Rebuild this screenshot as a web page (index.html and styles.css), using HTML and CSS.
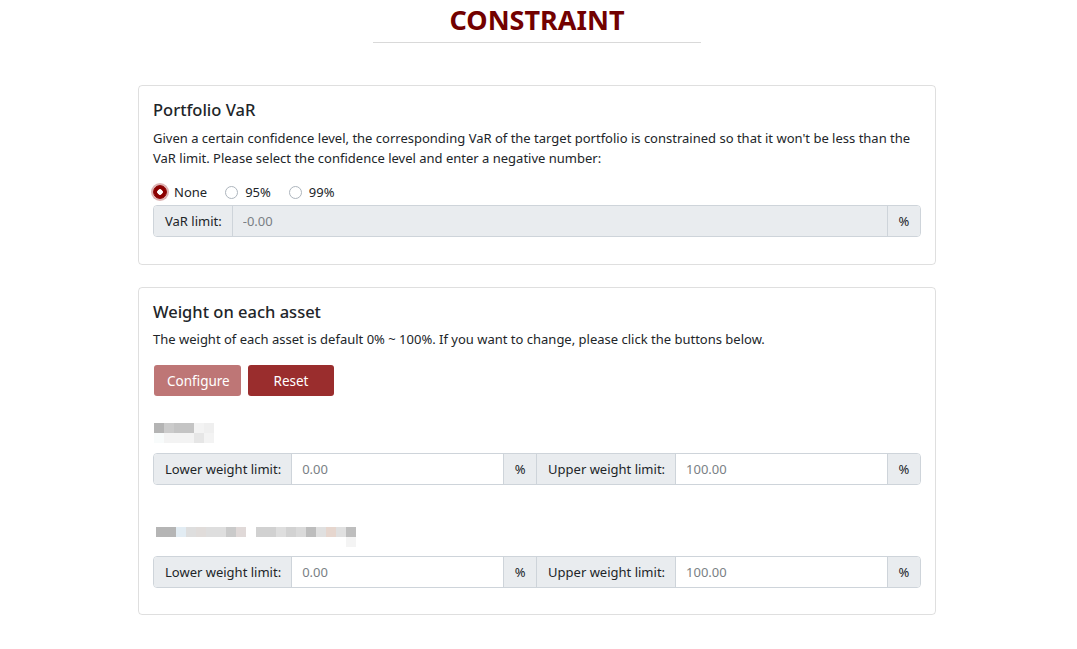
FILE: index.html
```html
<!DOCTYPE html>
<html lang="en">
<head>
<meta charset="utf-8">
<title>Constraint</title>
<link rel="stylesheet" href="styles.css">
</head>
<body>
<header class="title-block">
  <h1 class="page-title">CONSTRAINT</h1>
  <hr class="title-rule">
</header>
<main class="container">
  <section class="card card-var">
    <h2 class="card-title">Portfolio VaR</h2>
    <p class="card-text">Given a certain confidence level, the corresponding VaR of the target portfolio is constrained so that it won't be less than the VaR limit. Please select the confidence level and enter a negative number:</p>
    <div class="radio-row">
      <label class="radio"><input type="radio" name="conf" checked><span>None</span></label>
      <label class="radio"><input type="radio" name="conf"><span>95%</span></label>
      <label class="radio"><input type="radio" name="conf"><span>99%</span></label>
    </div>
    <div class="input-group">
      <span class="addon">VaR limit:</span>
      <input class="field field-disabled" type="text" placeholder="-0.00" disabled>
      <span class="addon addon-pct">%</span>
    </div>
  </section>

  <section class="card card-weight">
    <h2 class="card-title">Weight on each asset</h2>
    <p class="card-text">The weight of each asset is default 0% ~ 100%. If you want to change, please click the buttons below.</p>
    <div class="btn-row">
      <button class="btn btn-configure" type="button">Configure</button>
      <button class="btn btn-reset" type="button">Reset</button>
    </div>

    <div class="asset">
      <svg class="masked masked-1" width="62" height="20" viewBox="0 0 62 20" aria-label="asset name">
        <rect x="0" y="0" width="10" height="10" fill="#b4b4b4"/>
        <rect x="10" y="0" width="10" height="10" fill="#cbcbcb"/>
        <rect x="20" y="0" width="20" height="10" fill="#c4c4c4"/>
        <rect x="40" y="0" width="10" height="10" fill="#f3f3f3"/>
        <rect x="50" y="0" width="10" height="10" fill="#efefef"/>
        <rect x="0" y="10" width="10" height="10" fill="#f8fbfb"/>
        <rect x="10" y="10" width="30" height="10" fill="#f3f3f3"/>
        <rect x="40" y="10" width="10" height="10" fill="#e6e6e6"/>
        <rect x="50" y="10" width="10" height="10" fill="#f3f3f3"/>
      </svg>
      <div class="input-group">
        <span class="addon">Lower weight limit:</span>
        <input class="field" type="text" placeholder="0.00">
        <span class="addon addon-pct">%</span>
        <span class="addon">Upper weight limit:</span>
        <input class="field" type="text" placeholder="100.00">
        <span class="addon addon-pct">%</span>
      </div>
    </div>

    <div class="asset">
      <svg class="masked masked-2" width="202" height="20" viewBox="0 0 202 20" aria-label="asset name">
        <rect x="0" y="0" width="20" height="10" fill="#b5b5b5"/>
        <rect x="20" y="0" width="10" height="10" fill="#e2ecf3"/>
        <rect x="30" y="0" width="10" height="10" fill="#dedede"/>
        <rect x="40" y="0" width="10" height="10" fill="#e0dcda"/>
        <rect x="50" y="0" width="20" height="10" fill="#dedede"/>
        <rect x="70" y="0" width="10" height="10" fill="#cacaca"/>
        <rect x="80" y="0" width="10" height="10" fill="#e0d9d8"/>
        <rect x="100" y="0" width="20" height="10" fill="#d1d1d1"/>
        <rect x="120" y="0" width="10" height="10" fill="#dedede"/>
        <rect x="130" y="0" width="10" height="10" fill="#d2d2d2"/>
        <rect x="140" y="0" width="10" height="10" fill="#dadada"/>
        <rect x="150" y="0" width="10" height="10" fill="#bdbdbd"/>
        <rect x="160" y="0" width="10" height="10" fill="#e0e0e0"/>
        <rect x="170" y="0" width="10" height="10" fill="#e6d6ce"/>
        <rect x="180" y="0" width="10" height="10" fill="#e0e0e0"/>
        <rect x="190" y="0" width="10" height="10" fill="#bebebe"/>
        <rect x="190" y="10" width="10" height="10" fill="#f4f4f4"/>
      </svg>
      <div class="input-group">
        <span class="addon">Lower weight limit:</span>
        <input class="field" type="text" placeholder="0.00">
        <span class="addon addon-pct">%</span>
        <span class="addon">Upper weight limit:</span>
        <input class="field" type="text" placeholder="100.00">
        <span class="addon addon-pct">%</span>
      </div>
    </div>
  </section>
</main>
</body>
</html>
```

FILE: styles.css
```css
* { box-sizing: border-box; }

html, body {
  margin: 0;
  background: #fff;
}

body {
  padding-right: 3px;
  font-family: "Noto Sans", "Open Sans", sans-serif;
  font-size: 13px;
  color: #212529;
}

.title-block {
  padding-top: 3px;
}

.page-title {
  margin: 0;
  text-align: center;
  font-size: 27px;
  line-height: 34px;
  font-weight: 700;
  color: #720000;
}

.title-rule {
  width: 328px;
  margin: 5px auto 0;
  border: 0;
  border-top: 1px solid #d9d9d9;
  height: 0;
}

.container {
  width: 798px;
  margin: 42px auto 0;
  display: flex;
  flex-direction: column;
  gap: 22px;
}

.card {
  border: 1px solid rgba(0, 0, 0, 0.125);
  border-radius: 4px;
  padding: 12px 14px 27px;
}

.card-weight {
  padding-bottom: 26px;
}

.card-title {
  margin: 0;
  font-size: 16.5px;
  line-height: 24px;
  font-weight: 500;
  color: #212529;
}

.card-text {
  margin: 6px 0 0;
  line-height: 20px;
}

.card-weight .card-text {
  margin-top: 5px;
}

.radio-row {
  display: flex;
  align-items: center;
  gap: 18px;
  margin-top: 14px;
  height: 20px;
}

.radio {
  display: flex;
  align-items: center;
  gap: 7px;
  cursor: pointer;
}

.radio input {
  appearance: none;
  -webkit-appearance: none;
  margin: 0;
  width: 13px;
  height: 13px;
  border: 1px solid #adb5bd;
  border-radius: 50%;
  background: #fff;
}

.radio input:checked {
  width: 14px;
  height: 14px;
  background: radial-gradient(circle, #fff 0 2.5px, #8b0000 3px);
  border-color: #8b0000;
  box-shadow: 0 0 0 2px rgba(139, 0, 0, 0.3);
}

.input-group {
  display: flex;
  height: 32px;
  margin-top: 3px;
  border: 1px solid #ced4da;
  border-radius: 4px;
  overflow: hidden;
}

.addon {
  display: flex;
  align-items: center;
  padding: 0 10px 0 11px;
  background: #e9ecef;
  color: #212529;
  white-space: nowrap;
}

.addon + .field,
.field + .addon,
.addon + .addon {
  border-left: 1px solid #ced4da;
}

.addon-pct {
  width: 33px;
  justify-content: center;
  padding: 0;
}

.field {
  flex: 1;
  min-width: 0;
  border: 0;
  padding: 0 10px;
  font: inherit;
  color: #495057;
  background: #fff;
  outline: none;
}

.field::placeholder {
  color: #7a7f85;
}

.field-disabled {
  background: #e9ecef;
}

.btn-row {
  display: flex;
  gap: 7px;
  margin-top: 16px;
  padding-left: 1px;
}

.btn {
  height: 31px;
  border: 0;
  border-radius: 3px;
  padding: 0 13px;
  font: inherit;
  font-size: 13.5px;
  color: #fff;
}

.btn-configure {
  width: 87px;
  background: #be7676;
}

.btn-reset {
  width: 86px;
  background: #9a2d2d;
}

.asset {
  display: flex;
  flex-direction: column;
}

.masked {
  display: block;
}

.masked-1 {
  margin: 27px 0 0 1px;
}

.asset .input-group {
  margin-top: 10px;
}

.masked-2 {
  margin: 42px 0 0 3px;
}

.asset + .asset .input-group {
  margin-top: 9px;
}
```
